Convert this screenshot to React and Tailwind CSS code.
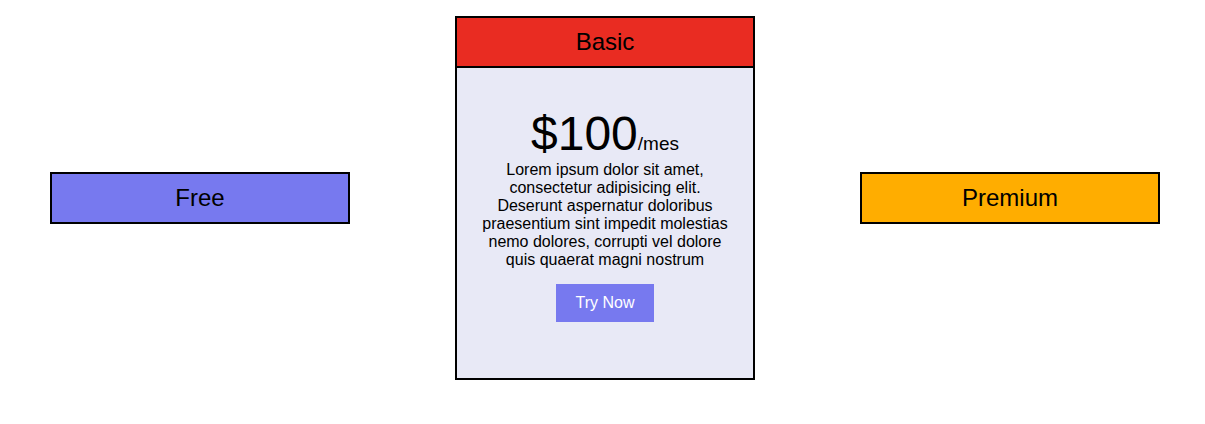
import React from 'react';

const font = { fontFamily: '"Liberation Sans", Arial, sans-serif' };

function SideBox({ label, color }) {
  return (
    <div className={`w-[300px] border-2 border-black py-[10px] text-center text-[24px] leading-[normal] ${color}`}>
      {label}
    </div>
  );
}

export default function App() {
  return (
    <div style={font} className="h-[424px] bg-white text-black">
      <div className="flex items-center gap-[105px] pl-[50px] pt-[16px]">
        <SideBox label="Free" color="bg-[#7779ef]" />

        <div className="w-[300px] h-[364px] border-2 border-black bg-[#e8e9f6] flex flex-col">
          <div className="bg-[#e92c22] border-b-2 border-black h-[50px] flex items-center justify-center text-[24px] leading-[normal]">
            Basic
          </div>
          <div className="flex flex-col items-center px-[22px] pt-[38px] text-center">
            <div className="leading-[normal]">
              <span className="text-[48px]">$100</span>
              <span className="text-[19px]">/mes</span>
            </div>
            <p className="text-[16px] leading-[18px]">
              Lorem ipsum dolor sit amet, consectetur adipisicing elit. Deserunt aspernatur doloribus praesentium sint impedit molestias nemo dolores, corrupti vel dolore quis quaerat magni nostrum
            </p>
            <button className="mt-[15px] w-[98px] h-[38px] bg-[#7779ef] text-white text-[16px]">
              Try Now
            </button>
          </div>
        </div>

        <SideBox label="Premium" color="bg-[#ffad00]" />
      </div>
    </div>
  );
}
